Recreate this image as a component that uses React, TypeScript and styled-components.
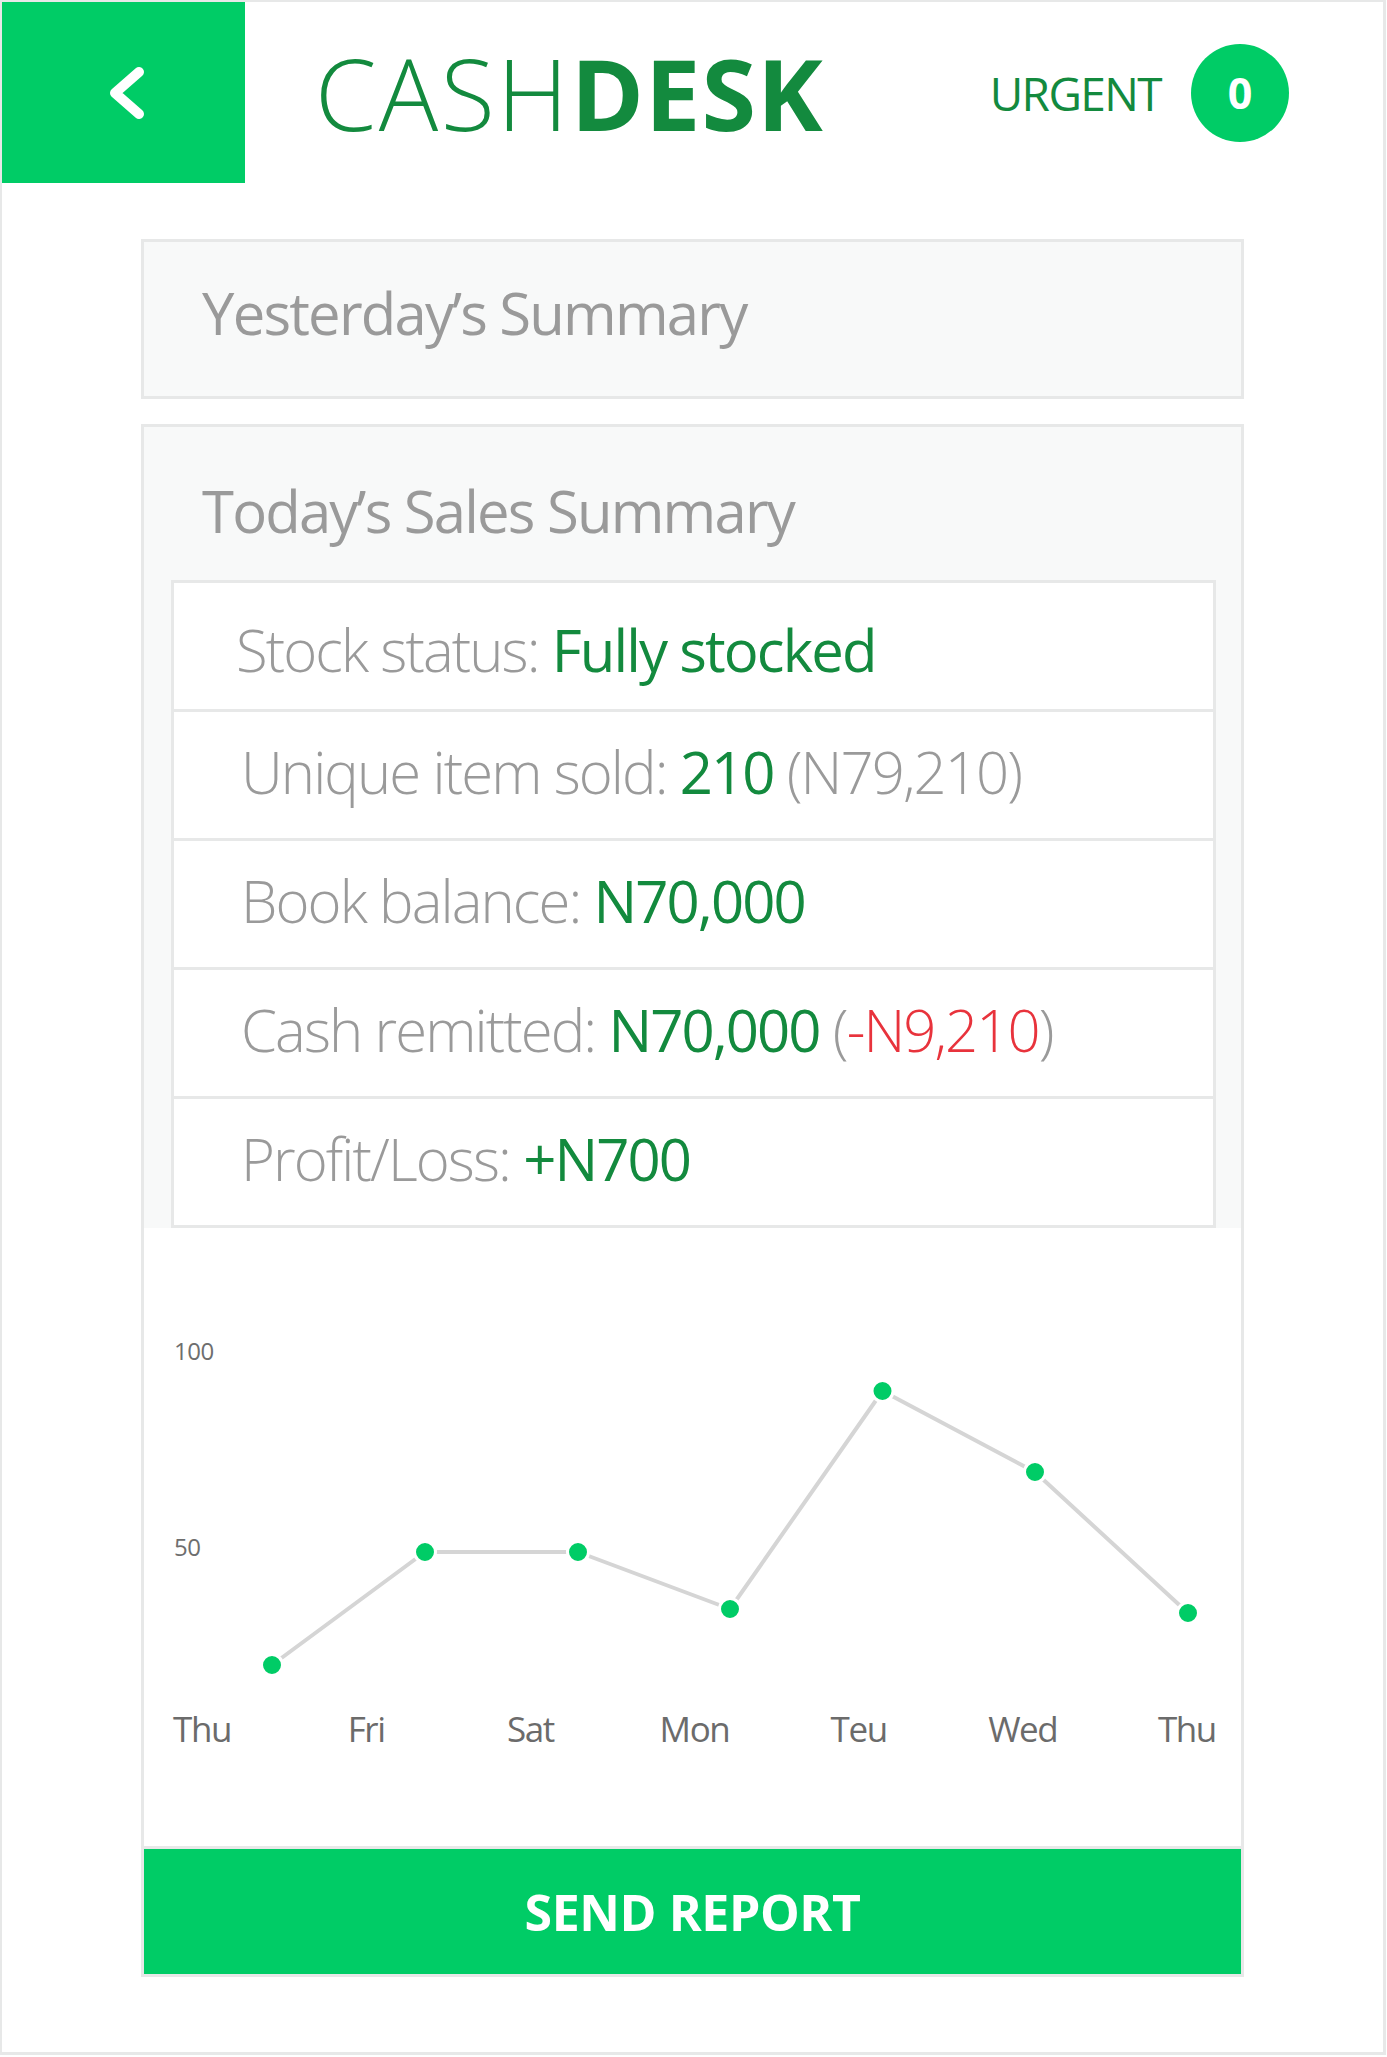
import React from "react";
import styled, { createGlobalStyle } from "styled-components";

const GlobalStyle = createGlobalStyle`
  html, body { margin: 0; padding: 0; background: #ffffff; }
  body { font-family: "Open Sans", "Noto Sans", sans-serif; }
  *, *::before, *::after { box-sizing: border-box; }
`;

const GREEN = "#00cc66";
const DARK_GREEN = "#138a3e";
const GRAY_TEXT = "#9a9a9a";
const BORDER = "#e7e8e8";
const PANEL_BG = "#f8f9f9";

const Frame = styled.div`
  width: 1386px;
  height: 2055px;
  border-style: solid;
  border-color: ${BORDER};
  border-width: 2px 3px 3px 2px;
  background: #fff;
  display: flex;
  flex-direction: column;
  overflow: hidden;
`;

const Header = styled.header`
  height: 181px;
  display: flex;
  align-items: center;
  flex-shrink: 0;
`;

const BackButton = styled.button`
  width: 243px;
  height: 181px;
  border: 0;
  margin: 0;
  padding: 0 0 0 9px;
  background: ${GREEN};
  display: flex;
  align-items: center;
  justify-content: center;
  cursor: pointer;
`;

const Logo = styled.h1`
  margin: 0 0 0 70px;
  font-size: 99px;
  line-height: 1;
  color: ${DARK_GREEN};
  font-weight: 300;
  letter-spacing: 2.4px;
  white-space: nowrap;
`;

const LogoBold = styled.span`
  font-weight: 700;
  letter-spacing: 1px;
`;

const Urgent = styled.span`
  margin-left: auto;
  font-size: 46px;
  line-height: 1;
  color: ${DARK_GREEN};
  font-weight: 400;
  letter-spacing: -1.6px;
`;

const Badge = styled.span`
  width: 98px;
  height: 98px;
  border-radius: 50%;
  margin: 0 94px 0 30px;
  background: ${GREEN};
  color: #fff;
  font-size: 43px;
  font-weight: 700;
  line-height: 1;
  display: flex;
  align-items: center;
  justify-content: center;
`;

const Content = styled.main`
  padding: 0 139px;
  display: flex;
  flex-direction: column;
`;

const SummaryCard = styled.section`
  margin-top: 56px;
  height: 160px;
  border: 3px solid ${BORDER};
  background: ${PANEL_BG};
  padding: 42px 0 0 58px;
`;

const CardTitle = styled.h2`
  margin: 0;
  font-size: 58px;
  line-height: 1;
  font-weight: 400;
  letter-spacing: -1.8px;
  color: ${GRAY_TEXT};
  white-space: nowrap;
`;

const SalesCard = styled.section`
  margin-top: 25px;
  border: 3px solid ${BORDER};
  background: #fff;
  display: flex;
  flex-direction: column;
`;

const SalesTop = styled.div`
  background: ${PANEL_BG};
  padding: 55px 25px 0 27px;
`;

const SalesTitleWrap = styled.div`
  padding-left: 31px;
  margin-bottom: 40px;
`;

const StatList = styled.ul`
  list-style: none;
  margin: 0;
  padding: 0;
  background: #fff;
  border-style: solid;
  border-color: ${BORDER};
  border-width: 3px 3px 0 3px;
`;

const StatRow = styled.li<{ $lead?: boolean }>`
  height: 129px;
  border-bottom: 3px solid ${BORDER};
  padding: ${(p) => (p.$lead ? "38px 0 0 62px" : "31px 0 0 67px")};
  font-size: 58px;
  line-height: 1;
  letter-spacing: -1.9px;
  white-space: nowrap;
`;

const Label = styled.span`
  color: ${GRAY_TEXT};
  font-weight: 300;
`;

const Value = styled.span`
  color: ${DARK_GREEN};
  font-weight: 400;
`;

const Negative = styled.span`
  color: #e8333c;
  font-weight: 300;
`;

const ChartSection = styled.div`
  padding: 102px 28px 100px 30px;
  display: flex;
  flex-direction: column;
`;

const Plot = styled.div`
  position: relative;
  height: 360px;
`;

const PlotSvg = styled.svg`
  position: absolute;
  inset: 0;
  overflow: visible;
`;

const YLabel = styled.span<{ $top: number }>`
  position: absolute;
  left: 0;
  top: ${(p) => p.$top}px;
  font-size: 24px;
  line-height: 1;
  letter-spacing: -0.5px;
  color: #6e6e6e;
`;

const DayRow = styled.div`
  margin: 21px -56px 0 -54px;
  display: grid;
  grid-template-columns: repeat(7, 1fr);
  font-size: 35px;
  line-height: 1;
  letter-spacing: -1.4px;
  color: #6b6b6b;
`;

const Day = styled.span`
  text-align: center;
`;

const SendButton = styled.button`
  height: 128px;
  margin: 0;
  border: 0;
  border-top: 3px solid ${BORDER};
  background: ${GREEN};
  color: #fff;
  font-family: inherit;
  font-size: 50px;
  font-weight: 700;
  letter-spacing: -0.4px;
  line-height: 1;
  cursor: pointer;
`;

const points: [number, number][] = [
  [98, 335],
  [251, 222],
  [404, 222],
  [556, 279],
  [708.5, 61],
  [861, 142],
  [1014, 283],
];

const days = ["Thu", "Fri", "Sat", "Mon", "Teu", "Wed", "Thu"];

function Chevron() {
  return (
    <svg width="40" height="56" viewBox="0 0 40 56" aria-hidden="true">
      <polyline
        points="31,7 7,28 31,49"
        fill="none"
        stroke="#ffffff"
        strokeWidth="10"
        strokeLinecap="round"
        strokeLinejoin="round"
      />
    </svg>
  );
}

export default function App() {
  return (
    <>
      <GlobalStyle />
      <Frame>
        <Header>
          <BackButton aria-label="Back">
            <Chevron />
          </BackButton>
          <Logo>
            CASH<LogoBold>DESK</LogoBold>
          </Logo>
          <Urgent>URGENT</Urgent>
          <Badge>0</Badge>
        </Header>
        <Content>
          <SummaryCard>
            <CardTitle>Yesterday’s Summary</CardTitle>
          </SummaryCard>
          <SalesCard>
            <SalesTop>
              <SalesTitleWrap>
                <CardTitle>Today’s Sales Summary</CardTitle>
              </SalesTitleWrap>
              <StatList>
                <StatRow $lead>
                  <Label>Stock status: </Label>
                  <Value>Fully stocked</Value>
                </StatRow>
                <StatRow>
                  <Label>Unique item sold: </Label>
                  <Value>210</Value>
                  <Label> (N79,210)</Label>
                </StatRow>
                <StatRow>
                  <Label>Book balance: </Label>
                  <Value>N70,000</Value>
                </StatRow>
                <StatRow>
                  <Label>Cash remitted: </Label>
                  <Value>N70,000</Value>
                  <Label> (</Label>
                  <Negative>-N9,210</Negative>
                  <Label>)</Label>
                </StatRow>
                <StatRow>
                  <Label>Profit/Loss: </Label>
                  <Value>+N700</Value>
                </StatRow>
              </StatList>
            </SalesTop>
            <ChartSection>
              <Plot>
                <YLabel $top={9}>100</YLabel>
                <YLabel $top={205}>50</YLabel>
                <PlotSvg width="1040" height="360" viewBox="0 0 1040 360">
                  <polyline
                    points={points.map((p) => p.join(",")).join(" ")}
                    fill="none"
                    stroke="#d5d5d5"
                    strokeWidth="4"
                    strokeLinejoin="round"
                  />
                  {points.map(([x, y], i) => (
                    <circle key={i} cx={x} cy={y} r="10.5" fill={GREEN} stroke="#ffffff" strokeWidth="3" />
                  ))}
                </PlotSvg>
              </Plot>
              <DayRow>
                {days.map((d, i) => (
                  <Day key={i}>{d}</Day>
                ))}
              </DayRow>
            </ChartSection>
            <SendButton>SEND REPORT</SendButton>
          </SalesCard>
        </Content>
      </Frame>
    </>
  );
}
